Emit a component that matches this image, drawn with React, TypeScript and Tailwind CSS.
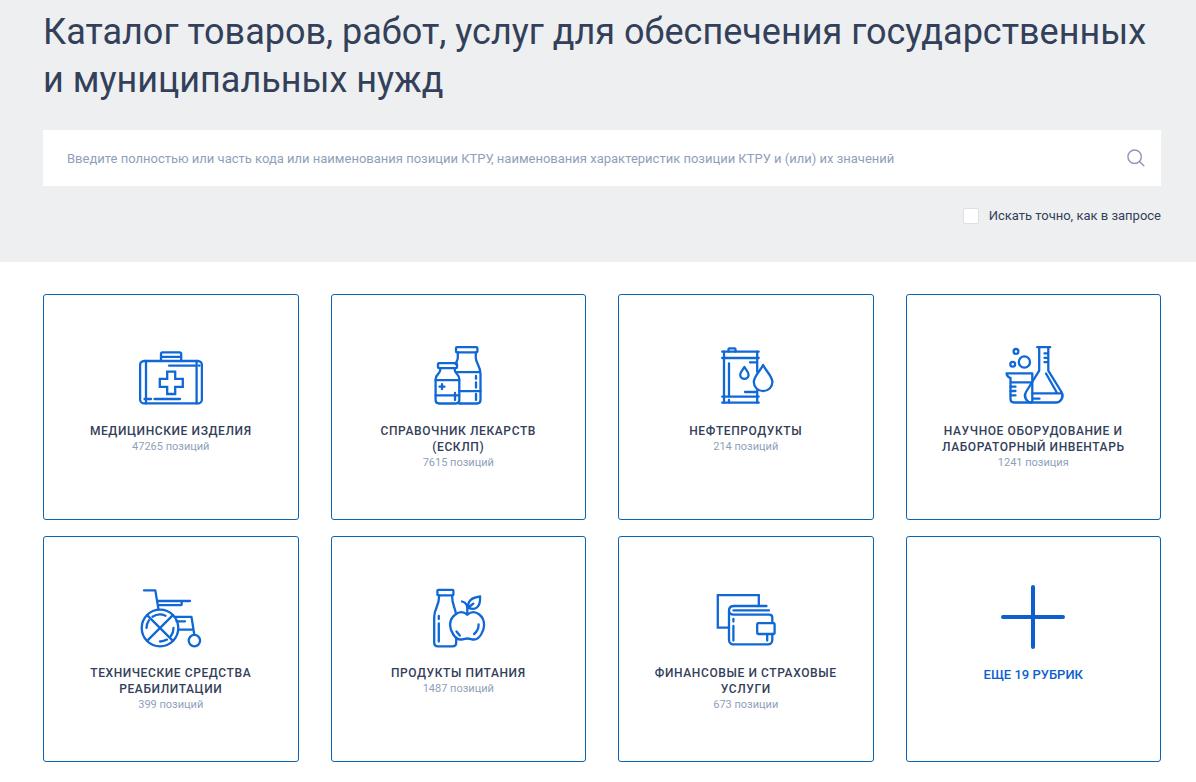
import type { ReactNode } from "react";

type Category = {
  title: string;
  count: string;
  icon: ReactNode;
};

function Icon({ children }: { children: ReactNode }) {
  return (
    <svg
      viewBox="0 0 64 64"
      className="size-16 shrink-0 text-[#1068d6]"
      fill="none"
      stroke="currentColor"
      strokeWidth="2.3"
      strokeLinecap="round"
      strokeLinejoin="round"
      aria-hidden="true"
    >
      {children}
    </svg>
  );
}

const medicalKit = (
  <Icon>
    <rect x="1.1" y="18" width="61.8" height="42.4" rx="4" />
    <path d="M7 18v42.4M57.6 18v42.4" />
    <path d="M22 18v-7a1.6 1.6 0 0 1 1.6-1.6h17A1.6 1.6 0 0 1 42.2 11v7M22 13.8h20" />
    <path strokeLinejoin="miter" d="M28.2 28.6h8v7.2h7.6v8h-7.6V51h-8v-7.2h-7.4v-8h7.400z" />
    <path d="M30 22.6h27M59.6 22.6h1M5.5 56h6.5M15.5 56H41" />
  </Icon>
);

const medicine = (
  <Icon>
    <rect x="30" y="4.2" width="21.4" height="5.2" rx="1" />
    <path d="M31.8 9.5v5.500c0 2.500-2 4-2.200 6M49.800 9.500v5.500c0 5 4.700 8 4.700 16v26c0 2-1.500 3.500-3.500 3.500H33" />
    <path d="M31 29.2h23M33.5 48.2h21" />
    <path d="M50 32.8v3M50 39.5v5M50 51v6" />
    <rect x="12" y="20.2" width="19" height="5" rx="1" />
    <path d="M14.2 25.2v2c0 3.500-4.600 4-4.600 9v20.800c0 2 1.500 3.500 3.500 3.500h16.700c2 0 3.500-1.500 3.500-3.500V36.200c0-5-4.500-5.500-4.500-9v-2" />
    <path d="M9.6 37.2h23.600M9.6 52.4h23.600M16 41.2v5M13.5 43.7h5M29 50v7" />
  </Icon>
);

const oilBarrel = (
  <Icon>
    <path d="M8.2 8.7h36.500M8.2 15h36.500M8.2 53.6h36.500M8.2 59.7h36.500" />
    <path d="M10 8.7v51M43.2 8.7v20M43.2 47.5v12.200" />
    <path d="M14.5 8.7V6.3a1 1 0 0 1 1-1h5a1 1 0 0 1 1 1v2.400" />
    <path d="M15 20.5v33M15 57v2.500M36 19.3h7M31 49h12" />
    <path d="M30.4 24c-1.800 3-4.200 5-4.200 7.700a4.200 4.200 0 0 0 8.400 0c0-2.700-2.400-4.700-4.200-7.700z" />
    <path d="M49.1 22c-3.200 6.700-9.300 11.200-9.300 17.100a9.300 9 0 0 0 18.600 0c0-5.900-6.100-10.400-9.300-17.100z" />
  </Icon>
);

const laboratory = (
  <Icon>
    <circle cx="15" cy="8.4" r="2.4" />
    <circle cx="23.4" cy="19" r="5.6" />
    <circle cx="11.7" cy="21.2" r="2.4" />
    <path d="M36.2 4.2h13M38.2 4.2v23.400L25 49c-3 5 1 10.500 5.500 10.500H55c4.500 0 8.500-5.500 5.500-10.500L47.300 27.600V4.2" />
    <path d="M43.5 10.4h3.300M43.5 14.8h3.300M43.5 19.2h3.300M45 30.5l10.500 18.500M31.5 50.3h29M32 55.7h6.500" />
    <path d="M31.3 59V30.3H5.5c.5 2.500 1.500 4.200 4 4.500V56c0 2 1.500 3.500 3.500 3.500h17.500M9.5 39.3h21.800" />
    <path d="M9.5 43.7h5M9.5 48h5M9.5 52.4h5" />
  </Icon>
);

const wheelchair = (
  <Icon>
    <path d="M5 5.4h11.300l3.200 19M19 16h32M19.5 20.2h21.700a1.500 1.500 0 0 0 1.500-1.500V16" />
    <circle cx="21" cy="43" r="18.3" />
    <path d="M8.1 30.1l25.800 25.800M33.9 30.1L8.1 55.9" />
    <path d="M7.5 43a13.500 13.500 0 0 1 2.400-7.700M13.5 31.7a13.500 13.500 0 0 1 13-1M34.5 43a13.500 13.500 0 0 1-2.600 8M28 54.6a13.500 13.500 0 0 1-7 1.900" />
    <path d="M35.5 31.9h17l2.800 17.800M37.5 36.3h8.500M40 44.7h14" />
    <circle cx="55.4" cy="55.6" r="5.7" />
  </Icon>
);

const food = (
  <Icon>
    <rect x="11.4" y="4.8" width="16" height="5.6" rx="1" />
    <path d="M13.2 10.5c0 11-5 13-5 21.500v25.500c0 2.200 1.600 3.800 3.800 3.800h14.600c2.200 0 3.600-1.600 3.600-3.800V54M26 10.5c.2 9 2.600 11.500 3.700 17" />
    <path d="M12.8 31v3M12.8 38.5v18" />
    <path d="M41.3 29.5c-4-3-8.600-2.700-12 0-3.200 2.500-5.200 6-5.200 10.500 0 6 5 14.500 10.400 14.500 2.400 0 4-1 6.800-1s4.400 1 6.800 1c5.400 0 10-8.500 10-14.500 0-4.500-1.600-8-4.800-10.500-3.400-2.700-8-3-12 0z" />
    <path d="M41.3 29.5v-6c0-3.700-2-6.200-5.300-7M41.3 23.5l6-4.800M42.3 22.7c-.8-7 2.700-9.700 11.800-11.200.5 10.300-4.300 14.700-11.800 11.200zM30.5 46.5l3.300 4M52.6 39.5c0 4-1.700 7.300-4.500 9.500" />
  </Icon>
);

const wallet = (
  <Icon>
    <path strokeLinejoin="miter" d="M15 42.7H3.8V10.2h41V21" />
    <path d="M52.5 21H20c-3 0-5 1.700-5 4.500V55c0 2.500 1.800 4.300 4.300 4.300H54c2.500 0 4.300-1.800 4.300-4.300v-6M58.3 38v-5.300c0-1.700-1.300-3-3-3H19.500c-2.500 0-4.500-1.700-4.500-4.200M19.5 25.4H55" />
    <rect x="43.2" y="38.2" width="17.4" height="10.8" rx="1" />
    <path d="M19.4 34v2.600M19.4 41v14.500M53.2 49.5v6" />
  </Icon>
);

const categories: Category[] = [
  { title: "Медицинские изделия", count: "47265 позиций", icon: medicalKit },
  { title: "Справочник лекарств (ЕСКЛП)", count: "7615 позиций", icon: medicine },
  { title: "Нефтепродукты", count: "214 позиций", icon: oilBarrel },
  { title: "Научное оборудование и лабораторный инвентарь", count: "1241 позиция", icon: laboratory },
  { title: "Технические средства реабилитации", count: "399 позиций", icon: wheelchair },
  { title: "Продукты питания", count: "1487 позиций", icon: food },
  { title: "Финансовые и страховые услуги", count: "673 позиции", icon: wallet },
];

const cardClass =
  "flex min-h-[226px] flex-col items-center rounded-[3px] border border-[#0b63b0] bg-white px-8 pt-12 pb-6 text-center hover:shadow-md";

function CategoryCard({ title, count, icon }: Category) {
  return (
    <a href="#" className={cardClass}>
      {icon}
      <span className="mt-4 text-[12px] leading-4 font-medium tracking-wider text-[#334059] uppercase">
        {title}
      </span>
      <span className="text-[11px] leading-4 text-[#8f9fba]">{count}</span>
    </a>
  );
}

export default function App() {
  return (
    <div className="min-h-screen bg-white font-[Roboto,'Liberation_Sans',sans-serif] text-[#334059]">
      <header className="bg-[#eeeff0] pt-2 pr-[35px] pb-9 pl-[43px]">
        <h1 className="text-[36px] leading-12">
          Каталог товаров, работ, услуг для обеспечения государственных и муниципальных нужд
        </h1>
        <form onSubmit={(event) => event.preventDefault()}>
          <div className="mt-[26px] flex h-14 items-center bg-white pr-4 pl-6">
            <input
              type="text"
              aria-label="Поиск по каталогу"
              placeholder="Введите полностью или часть кода или наименования позиции КТРУ, наименования характеристик позиции КТРУ и (или) их значений"
              className="h-full min-w-0 flex-1 text-[13px] outline-none placeholder:text-[#8f9fba]"
            />
            <button type="submit" aria-label="Найти" className="ml-4 text-[#8f96b5]">
              <svg viewBox="0 0 18 18" className="size-[18px]" fill="none" stroke="currentColor" strokeWidth="1.4" strokeLinecap="round">
                <circle cx="7.600" cy="7.700" r="6.700" />
                <path d="M12.500 12.600l4.300 4.200" />
              </svg>
            </button>
          </div>
          <div className="mt-5 flex justify-end">
            <label className="flex h-5 items-center gap-2.5 text-[13px]">
              <input
                type="checkbox"
                className="size-4 appearance-none rounded-[2px] border border-[#dddfe5] bg-white checked:bg-[#0d65d3]"
              />
              Искать точно, как в запросе
            </label>
          </div>
        </form>
      </header>
      <main className="grid grid-cols-4 gap-x-8 gap-y-4 pt-8 pr-[35px] pb-5 pl-[43px]">
        {categories.map((category) => (
          <CategoryCard key={category.title} {...category} />
        ))}
        <button type="button" className={cardClass}>
          <svg viewBox="0 0 64 64" className="size-16 shrink-0 text-[#0d5fd0]" stroke="currentColor" strokeWidth="4" strokeLinecap="round" aria-hidden="true">
            <path d="M32 2v60M2 32h60" />
          </svg>
          <span className="mt-4 text-[13px] leading-5 font-medium text-[#0d5fd0] uppercase">Еще 19 рубрик</span>
        </button>
      </main>
    </div>
  );
}
